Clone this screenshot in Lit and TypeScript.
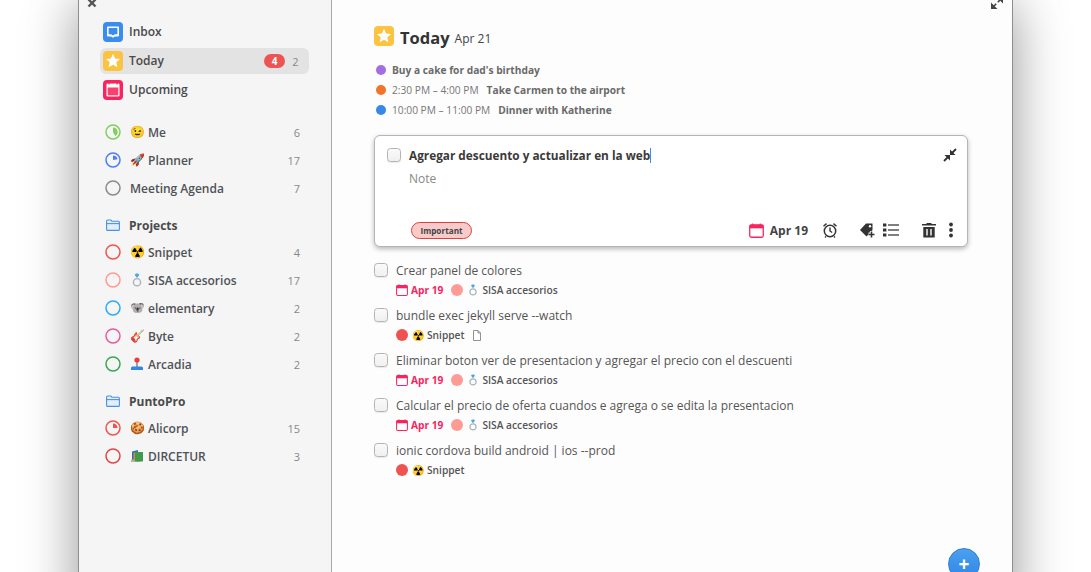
import { LitElement, html, css, svg } from "lit";
import { customElement } from "lit/decorators.js";

const ring = (color: string, pct: number) => {
  const a = pct * 2 * Math.PI;
  const x = 8 + 4.6 * Math.sin(a), y = 8 - 4.6 * Math.cos(a);
  return html`<svg class="ring" viewBox="0 0 16 16">
    <circle cx="8" cy="8" r="7" fill="none" stroke=${color} stroke-width="1.5"></circle>
    ${pct > 0 ? svg`<path d="M8 8V3.4A4.6 4.6 0 ${pct > 0.5 ? 1 : 0} 1 ${x} ${y}Z" fill=${color}></path>` : ""}
  </svg>`;
};

const starIcon = html`<svg class="ico20" viewBox="0 0 20 20"><rect width="20" height="20" rx="4" fill="#fcc340"></rect><path d="M10 2.8l2.1 4.6 5 .5-3.8 3.3 1.1 5L10 13.7l-4.4 2.5 1.1-5-3.8-3.3 5-.5z" fill="#fff"></path></svg>`;
const inboxIcon = html`<svg class="ico20" viewBox="0 0 20 20"><rect width="20" height="20" rx="4" fill="#3a8ced"></rect><path d="M5 4.5h10a1 1 0 0 1 1 1v8a1 1 0 0 1-1 1h-3l-2 1.2-2-1.2H5a1 1 0 0 1-1-1v-8a1 1 0 0 1 1-1z" fill="#fff"></path><path d="M5.6 6h8.8v6.2H12L10 13.6 8 12.2H5.6z" fill="#3a8ced"></path></svg>`;
const upIcon = html`<svg class="ico20" viewBox="0 0 20 20"><rect width="20" height="20" rx="4" fill="#f9245e"></rect><rect x="3.5" y="3.5" width="13" height="13" rx="1.2" fill="#fff"></rect><rect x="4.7" y="7.5" width="10.6" height="7.8" fill="#f9416f"></rect><path d="M6 2.5v2M14 2.5v2" stroke="#f9245e" stroke-width="1.2"></path></svg>`;
const calIcon = (cls: string) => html`<svg class=${cls} viewBox="0 0 14 14"><rect x=".7" y="1.7" width="12.6" height="11.6" rx="1.4" fill="#fff" stroke="#f9245e" stroke-width="1.2"></rect><rect x=".7" y="1.7" width="12.6" height="3.3" fill="#f9245e"></rect><path d="M3.5 .4v2M10.5 .4v2" stroke="#f9245e" stroke-width="1.1"></path></svg>`;
const folder = html`<svg class="folder" viewBox="0 0 14 12"><path d="M.6 2A1 1 0 0 1 1.6 1h3.2l1 1.2h6.6a1 1 0 0 1 1 1v7.2a1 1 0 0 1-1 1H1.6a1 1 0 0 1-1-1z" fill="#e4effc" stroke="#4a90e8" stroke-width="1.1"></path><path d="M.8 4.6h12.4" stroke="#4a90e8" stroke-width="1.1"></path></svg>`;

const ringEmoji = html`<svg class="esvg" viewBox="0 0 14 14"><circle cx="7" cy="9.2" r="3.6" fill="none" stroke="#a9b4bb" stroke-width="1.4"></circle><path d="M4.6 1.8L6 .6h2l1.4 1.2L7 5z" fill="#4aa8e8"></path></svg>`;
const joyEmoji = html`<svg class="esvg" viewBox="0 0 14 14"><rect x="6.3" y="4" width="1.4" height="6" fill="#7a7f88"></rect><circle cx="7" cy="3" r="2.6" fill="#ef3b3b"></circle><path d="M1 11a1.5 1.5 0 0 1 1.5-1.5h9A1.5 1.5 0 0 1 13 11v2H1z" fill="#2f86e6"></path></svg>`;
const booksEmoji = html`<svg class="esvg" viewBox="0 0 14 14"><path d="M2 2.5l6-1.5v9l-6 1.5z" fill="#2f6fb8"></path><rect x="1" y="10.5" width="9" height="2.5" fill="#b9b4a8"></rect><rect x="5" y="3" width="8" height="9.5" fill="#3f9a4b"></rect><rect x="3.5" y="3.5" width="1.5" height="8" fill="#e08a2e"></rect></svg>`;

const emoji: Record<string, any> = {
  me: html`<span class="emo">😉</span>`, planner: html`<span class="emo">🚀</span>`, snippet: html`<span class="emo">☢️</span>`,
  sisa: html`<span class="emo">${ringEmoji}</span>`, el: html`<span class="emo">🐨</span>`, byte: html`<span class="emo">🎸</span>`,
  arc: html`<span class="emo">${joyEmoji}</span>`, ali: html`<span class="emo">🍪</span>`, dir: html`<span class="emo">${booksEmoji}</span>`,
};

const top = [
  { c: "#7fd05c", p: 0.42, e: "me", t: "Me", n: "6" },
  { c: "#4b7bff", p: 0.22, e: "planner", t: "Planner", n: "17" },
  { c: "#8a8a8a", p: 0, e: "", t: "Meeting Agenda", n: "7" },
];
const projects = [
  { c: "#ef5350", p: 0, e: "snippet", t: "Snippet", n: "4" },
  { c: "#ff9a94", p: 0.01, e: "sisa", t: "SISA accesorios", n: "17" },
  { c: "#2aa9ff", p: 0, e: "el", t: "elementary", n: "2" },
  { c: "#e85a9f", p: 0, e: "byte", t: "Byte", n: "2" },
  { c: "#3aa552", p: 0, e: "arc", t: "Arcadia", n: "2" },
];
const punto = [
  { c: "#ef5350", p: 0.25, e: "ali", t: "Alicorp", n: "15" },
  { c: "#e04545", p: 0, e: "dir", t: "DIRCETUR", n: "3" },
];
const tasks = [
  { t: "Crear panel de colores", d: true, c: "#ff9a94", e: "sisa", p: "SISA accesorios", note: false },
  { t: "bundle exec jekyll serve --watch", d: false, c: "#ef5350", e: "snippet", p: "Snippet", note: true },
  { t: "Eliminar boton ver de presentacion y agregar el precio con el descuenti", d: true, c: "#ff9a94", e: "sisa", p: "SISA accesorios", note: false },
  { t: "Calcular el precio de oferta cuandos e agrega o se edita la presentacion", d: true, c: "#ff9a94", e: "sisa", p: "SISA accesorios", note: false },
  { t: "ionic cordova build android | ios --prod", d: false, c: "#ef5350", e: "snippet", p: "Snippet", note: false },
];

@customElement("app-root")
export class AppRoot extends LitElement {
  static styles = css`
    :host { display: block; height: 572px; overflow: hidden; background: #fff; font-family: "Open Sans", sans-serif; color: #444; }
    .window { position: relative; margin-left: 78px; width: 935px; height: 620px; box-sizing: border-box; display: flex; border-left: 1px solid #8e8e8e; border-right: 1px solid #8e8e8e; background: #fdfdfd; box-shadow: 0 4px 50px rgba(0,0,0,.42); }
    .close { position: absolute; left: 7px; top: -3px; width: 12px; height: 12px; }
    .expand { position: absolute; right: 9px; top: -3px; width: 12px; height: 12px; }
    .side { width: 253px; flex: none; box-sizing: border-box; background: #f5f5f5; border-right: 1px solid #a9a9a9; padding: 19px 22px 0 21px; }
    .nav { height: 26px; margin-bottom: 3px; display: flex; align-items: center; gap: 6px; padding: 0 7px 0 3px; border-radius: 6px; font-size: 12px; font-weight: 600; color: #4a4a4a; }
    .nav > span:nth-of-type(1) { padding-bottom: 2px; }
    .nav.sel { background: #e3e3e3; }
    .ico20 { width: 20px; height: 20px; flex: none; }
    .badge { margin-left: auto; width: 21px; height: 14px; line-height: 14px; border-radius: 7px; background: #ed5353; color: #fff; font-size: 10px; font-weight: 700; text-align: center; }
    .navn { font-size: 11px; font-weight: 400; color: #888; width: 13px; margin-left: -2px; text-align: center; }
    .group { margin-top: 15px; }
    .row { height: 28px; display: flex; align-items: center; padding: 0 9px 0 5px; font-size: 12px; font-weight: 600; color: #4f5257; }
    .ring { width: 16px; height: 16px; flex: none; margin-right: 9px; }
    .emo { display: inline-flex; align-items: center; font-size: 12px; width: 18px; flex: none; font-weight: 400; font-family: "Noto Color Emoji", "Open Sans", sans-serif; }
    .esvg { width: 14px; height: 14px; flex: none; }
    .num { margin-left: auto; font-size: 11px; font-weight: 400; color: #888; }
    .head { height: 26px; margin-top: 10px; display: flex; align-items: center; gap: 9px; padding-left: 6px; font-size: 12px; font-weight: 700; color: #4a4a4a; }
    .folder { width: 14px; height: 12px; flex: none; }
    .main { flex: 1; min-width: 0; padding: 26px 43px 0 42px; position: relative; }
    .title { display: flex; align-items: center; height: 20px; gap: 6px; }
    .title b { font-size: 16.5px; font-weight: 700; color: #333; margin: 2px -1px 0 0; }
    .title span { font-size: 12px; color: #444; padding-top: 5px; }
    .events { margin-top: 14px; }
    .ev { height: 20px; display: flex; align-items: center; font-size: 10.2px; color: #777; }
    .dot { width: 10px; height: 10px; border-radius: 50%; flex: none; margin: 0 6px 0 2px; }
    .ev b { font-weight: 700; color: #6a6a6a; }
    .ev span { margin-right: 8px; }
    .card { margin: 15px 0 0; width: 594px; height: 112px; box-sizing: border-box; background: #fff; border: 1px solid #b5b5b5; border-radius: 6px; box-shadow: 0 2px 5px rgba(0,0,0,.28); padding: 11px 8px 0 12px; position: relative; display: flex; flex-direction: column; }
    .ctitle { display: flex; align-items: center; gap: 8px; height: 16px; font-size: 11.8px; font-weight: 700; color: #3a3a3a; }
    .caret { display: inline-block; width: 1px; height: 15px; background: #3a8ced; vertical-align: -3px; }
    .note { margin: 7px 0 0 22px; font-size: 12px; color: #888; }
    .cb { width: 14px; height: 14px; box-sizing: border-box; flex: none; border: 1px solid #b4b4b4; border-radius: 3.5px; background: linear-gradient(#fafafa,#f0f0f0); box-shadow: 0 1px 1px rgba(0,0,0,.08); }
    .shrink { position: absolute; right: 10px; top: 12px; width: 14px; height: 14px; }
    .bar { margin-top: 34px; display: flex; align-items: center; height: 18px; padding-left: 24px; }
    .tag { width: 61px; height: 17px; box-sizing: border-box; border: 1px solid #e0403c; border-radius: 9px; background: #f8caca; font-size: 8.2px; font-weight: 700; line-height: 15px; text-align: center; color: #444; }
    .cal16 { width: 14px; height: 14px; flex: none; }
    .bar .cal16 { width: 15px; height: 15px; margin-left: auto; }
    .date { font-size: 12px; font-weight: 700; color: #444; margin: 0 14px 0 6px; }
    .tool { width: 16px; height: 16px; flex: none; }
    .tasks { margin-top: 14px; margin-left: 0; }
    .task { height: 45px; }
    .tl { display: flex; align-items: center; gap: 8px; height: 18px; font-size: 12px; color: #555; }
    .sub { display: flex; align-items: center; height: 18px; margin: 2px 0 0 22px; font-size: 10.2px; font-weight: 600; color: #555; }
    .sub .cal16 { width: 12px; height: 12px; margin-right: 3px; }
    .red { color: #f9245e; font-weight: 700; margin-right: 8px; }
    .pd { width: 12px; height: 12px; border-radius: 50%; margin-right: 4px; flex: none; }
    .sub .emo { font-size: 10px; width: 15px; }
    .sub .esvg { width: 12px; height: 12px; }
    .doc { width: 10px; height: 11px; margin-left: 7px; }
    .fab { position: absolute; left: 616px; top: 548px; width: 32px; height: 32px; border-radius: 50%; background: linear-gradient(#4ba0ee,#2f86e6); border: 1px solid #2f7fd6; box-sizing: border-box; color: #fff; font-size: 19px; font-weight: 700; line-height: 30px; text-align: center; }
  `;

  row(r: any) {
    return html`<div class="row">${ring(r.c, r.p)}${r.e ? emoji[r.e] : ""}<span>${r.t}</span><span class="num">${r.n}</span></div>`;
  }

  render() {
    return html`<div class="window">
      <svg class="close" viewBox="0 0 12 12"><path d="M2.5 2.5l7 7M9.5 2.5l-7 7" stroke="#555" stroke-width="2.4"></path></svg>
      <aside class="side">
        <div class="nav">${inboxIcon}<span>Inbox</span></div>
        <div class="nav sel">${starIcon}<span>Today</span><span class="badge">4</span><span class="navn">2</span></div>
        <div class="nav">${upIcon}<span>Upcoming</span></div>
        <div class="group">${top.map((r) => this.row(r))}</div>
        <div class="head">${folder}<span>Projects</span></div>
        ${projects.map((r) => this.row(r))}
        <div class="head">${folder}<span>PuntoPro</span></div>
        ${punto.map((r) => this.row(r))}
      </aside>
      <main class="main">
        <svg class="expand" viewBox="0 0 12 12"><path d="M0 12V5.5L6.5 12zM12 0v6.5L5.5 0z" fill="#444"></path><path d="M3 9l2.2-2.2M9 3L6.8 5.2" stroke="#444" stroke-width="1.6"></path></svg>
        <div class="title">${starIcon}<b>Today</b><span>Apr 21</span></div>
        <div class="events">
          <div class="ev"><i class="dot" style="background:#a56de2"></i><b>Buy a cake for dad's birthday</b></div>
          <div class="ev"><i class="dot" style="background:#f37329"></i><span>2:30 PM – 4:00 PM</span><b>Take Carmen to the airport</b></div>
          <div class="ev"><i class="dot" style="background:#3689e6"></i><span>10:00 PM – 11:00 PM</span><b>Dinner with Katherine</b></div>
        </div>
        <section class="card">
          <div class="ctitle"><i class="cb"></i><span>Agregar descuento y actualizar en la web<i class="caret"></i></span></div>
          <svg class="shrink" viewBox="0 0 14 14"><path d="M1 13l4-4M13 1L9 5" stroke="#333" stroke-width="1.8"></path><path d="M7 7v5.5L1.5 7zM7 7V1.5L12.5 7z" fill="#333"></path></svg>
          <div class="note">Note</div>
          <div class="bar">
            <span class="tag">Important</span>
            ${calIcon("cal16")}<span class="date">Apr 19</span>
            <svg class="tool" viewBox="0 0 16 16"><circle cx="8" cy="9" r="5.7" fill="none" stroke="#333" stroke-width="1.5"></circle><path d="M8 5.5V9l2.2 1.5M1.5 4.2l3-2.6M14.5 4.2l-3-2.6M4 14.5l-1 1M12 14.5l1 1" fill="none" stroke="#333" stroke-width="1.4"></path></svg>
            <svg class="tool" style="margin-left:21px" viewBox="0 0 16 16"><path d="M1 8l6-6.5h6.5V8l-6 6.5z" fill="#333"></path><circle cx="11" cy="4.2" r="1.2" fill="#fff"></circle><path d="M12.5 9v6M9.5 12h6" stroke="#fff" stroke-width="3.2"></path><path d="M12.5 9.5v6M9.5 12.5h6" stroke="#333" stroke-width="1.6"></path></svg>
            <svg class="tool" style="margin-left:8px" viewBox="0 0 16 16"><path d="M5 3h11M5 8h11M5 13h11" stroke="#555" stroke-width="1.4"></path><rect x="0" y="1.5" width="3.4" height="3" fill="#333"></rect><rect x="0" y="6.5" width="3.4" height="3" fill="#333"></rect><rect x="0" y="11.5" width="3.4" height="3" fill="#333"></rect></svg>
            <svg class="tool" style="margin-left:22px" viewBox="0 0 16 16"><path d="M5.5 2V1h5v1H15v1.6H1V2zM2.3 5h11.4v10.5H2.3z" fill="#333"></path><path d="M6 7v6.5M10 7v6.5" stroke="#fff" stroke-width="1.4"></path></svg>
            <svg class="tool" style="margin-left:6px" viewBox="0 0 16 16"><circle cx="8" cy="2.5" r="1.9" fill="#333"></circle><circle cx="8" cy="8" r="1.9" fill="#333"></circle><circle cx="8" cy="13.5" r="1.9" fill="#333"></circle></svg>
          </div>
        </section>
        <div class="tasks">
          ${tasks.map((t) => html`<div class="task">
            <div class="tl"><i class="cb"></i><span>${t.t}</span></div>
            <div class="sub">
              ${t.d ? html`${calIcon("cal16")}<span class="red">Apr 19</span>` : ""}
              <i class="pd" style="background:${t.c}"></i>${emoji[t.e]}<span>${t.p}</span>
              ${t.note ? html`<svg class="doc" viewBox="0 0 10 11"><path d="M1.5.5h4.5l2.5 2.5v7.5h-7zM6 .5V3h2.5" fill="#fff" stroke="#777" stroke-width=".8"></path></svg>` : ""}
            </div>
          </div>`)}
        </div>
        <div class="fab">+</div>
      </main>
    </div>`;
  }
}
